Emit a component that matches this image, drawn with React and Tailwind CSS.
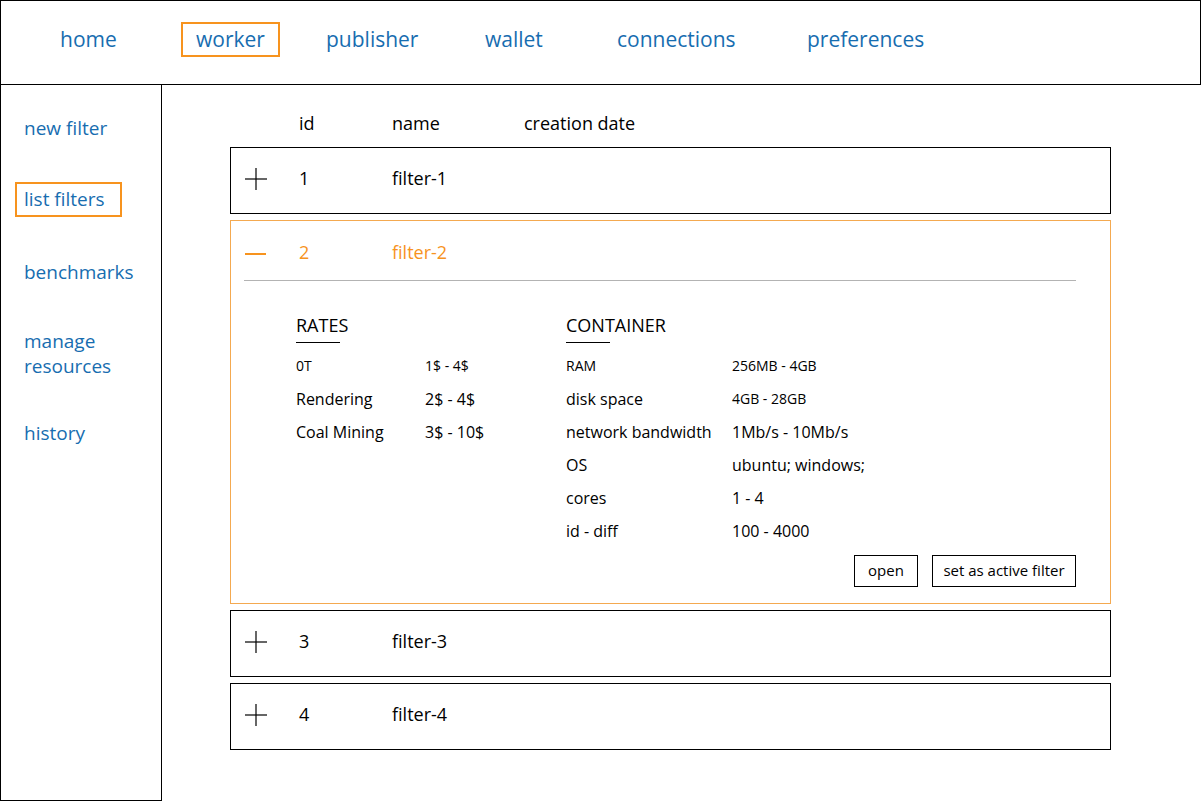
import React from "react";

const font = { fontFamily: '"Open Sans", "Noto Sans", sans-serif' };

function Plus() {
  return (
    <svg width="24" height="24" viewBox="0 0 24 24" className="block">
      <line x1="1" y1="12" x2="23" y2="12" stroke="#000" strokeWidth="1.2" />
      <line x1="12" y1="1" x2="12" y2="23" stroke="#000" strokeWidth="1.2" />
    </svg>
  );
}

function Minus() {
  return (
    <svg width="24" height="24" viewBox="0 0 24 24" className="block">
      <line x1="1" y1="12" x2="22" y2="12" stroke="#f7931e" strokeWidth="2" />
    </svg>
  );
}

const navItems = [
  { label: "home", w: "w-[121px]" },
  { label: "worker", w: "w-[145px]", active: true },
  { label: "publisher", w: "w-[159px]" },
  { label: "wallet", w: "w-[132px]" },
  { label: "connections", w: "w-[190px]" },
  { label: "preferences", w: "w-[200px]" },
];

const rates = [
  ["0T", "1$ - 4$", true],
  ["Rendering", "2$ - 4$"],
  ["Coal Mining", "3$ - 10$"],
];

const container = [
  ["RAM", "256MB - 4GB", true, true],
  ["disk space", "4GB - 28GB", false, true],
  ["network bandwidth", "1Mb/s - 10Mb/s"],
  ["OS", "ubuntu; windows;"],
  ["cores", "1 - 4"],
  ["id - diff", "100 - 4000"],
];

function CollapsedRow({ id }) {
  return (
    <div className="h-[67px] border border-black flex items-center pl-[13px] pb-[5px] text-[18px] text-black">
      <div className="w-[55px] pt-[2px]">
        <Plus />
      </div>
      <div className="w-[93px]">{id}</div>
      <div>filter-{id}</div>
    </div>
  );
}

function ExpandedRow() {
  return (
    <div className="border border-[#f4a950] pb-[16px]">
      <div className="h-[59px] pt-[4px] flex items-center pl-[13px] text-[18px] text-[#f7931e]">
        <div className="w-[55px] pt-[2px]">
          <Minus />
        </div>
        <div className="w-[93px]">2</div>
        <div>filter-2</div>
      </div>
      <div className="ml-[13px] mr-[34px] border-t border-[#b3b3b3]" />
      <div className="flex pl-[65px] pt-[32px] text-black">
        <div className="w-[270px]">
          <div className="text-[18px] leading-[24px]">RATES</div>
          <div className="mt-[5px] w-[44px] border-t border-black" />
          <div className="mt-[6px]">
            {rates.map(([k, v, small]) => (
              <div key={k} className="h-[33px] flex items-center">
                <div className={"w-[129px] " + (small ? "text-[14px]" : "text-[16px]")}>{k}</div>
                <div className={small ? "text-[14px]" : "text-[16px]"}>{v}</div>
              </div>
            ))}
          </div>
        </div>
        <div className="flex-1">
          <div className="text-[18px] leading-[24px]">CONTAINER</div>
          <div className="mt-[5px] w-[44px] border-t border-black" />
          <div className="mt-[6px]">
            {container.map(([k, v, smallK, smallV]) => (
              <div key={k} className="h-[33px] flex items-center">
                <div className={"w-[166px] " + (smallK ? "text-[14px]" : "text-[16px]")}>{k}</div>
                <div className={smallV ? "text-[14px]" : "text-[16px]"}>{v}</div>
              </div>
            ))}
          </div>
        </div>
      </div>
      <div className="mt-[8px] mr-[34px] flex justify-end gap-[14px] text-[15px] text-black">
        <button className="w-[64px] h-[32px] border border-black flex items-center justify-center pb-[2px]">open</button>
        <button className="w-[144px] h-[32px] border border-black flex items-center justify-center pb-[2px]">
          set as active filter
        </button>
      </div>
    </div>
  );
}

export default function App() {
  return (
    <div className="w-[1201px] h-[801px] bg-white overflow-hidden" style={font}>
      <div className="h-[85px] border border-black flex items-center pb-[6px] pl-[59px] text-[21px] text-[#176db0]">
        {navItems.map((item) => (
          <div key={item.label} className={item.w}>
            {item.active ? (
              <div className="w-[99px] h-[35px] border-2 border-[#f7931e] flex items-center pl-[13px]">
                {item.label}
              </div>
            ) : (
              <span>{item.label}</span>
            )}
          </div>
        ))}
      </div>
      <div className="flex">
        <div className="w-[162px] h-[716px] border-l border-r border-b border-black text-[19px] leading-[25px] text-[#176db0]">
          <div className="mt-[31px] pl-[23px]">new filter</div>
          <div className="mt-[41px] ml-[14px] w-[107px] h-[35px] border-2 border-[#f7931e] pl-[7px] flex items-center">
            list filters
          </div>
          <div className="mt-[43px] pl-[23px]">benchmarks</div>
          <div className="mt-[44px] pl-[23px]">
            manage
            <br />
            resources
          </div>
          <div className="mt-[42px] pl-[23px]">history</div>
        </div>
        <div className="flex-1 pl-[68px] pt-[26px]">
          <div className="w-[881px]">
            <div className="flex pl-[69px] text-[18px] leading-[24px] text-black">
              <div className="w-[93px]">id</div>
              <div className="w-[132px]">name</div>
              <div>creation date</div>
            </div>
            <div className="mt-[12px] flex flex-col gap-[6px]">
              <CollapsedRow id={1} />
              <ExpandedRow />
              <CollapsedRow id={3} />
              <CollapsedRow id={4} />
            </div>
          </div>
        </div>
      </div>
    </div>
  );
}
